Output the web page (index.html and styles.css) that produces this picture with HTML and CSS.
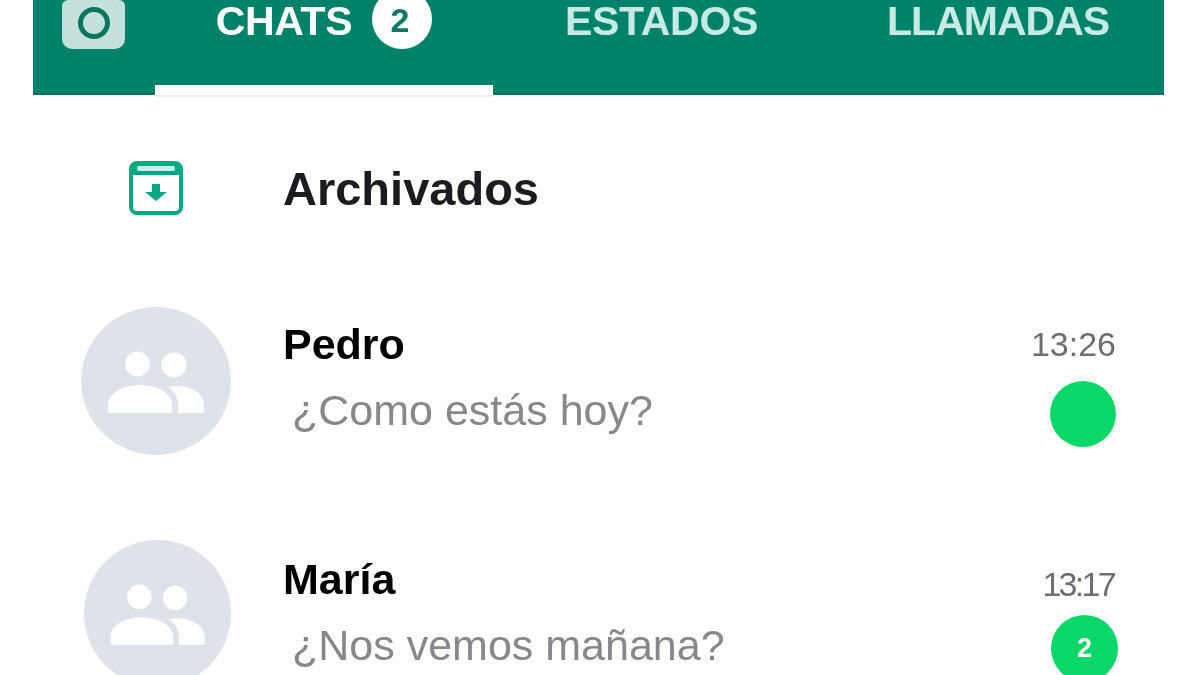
FILE: index.html
```html
<!DOCTYPE html>
<html lang="es">
<head>
<meta charset="utf-8">
<title>Chats</title>
<link rel="stylesheet" href="styles.css">
</head>
<body>
<header class="bar">
  <div class="camera"><span class="lens"></span></div>
  <div class="tab tab-active">
    <div class="tab-inner"><span class="tab-label">CHATS</span><span class="tab-count">2</span></div>
  </div>
  <div class="tab-plain tab-estados">ESTADOS</div>
  <div class="tab-plain tab-llamadas">LLAMADAS</div>
</header>
<section class="archived">
  <svg class="archive-icon" viewBox="0 0 54 54" aria-hidden="true">
    <rect x="2" y="2" width="50" height="50" rx="6" fill="none" stroke="#05a884" stroke-width="4"/>
    <rect x="3" y="3" width="48" height="11" fill="#05a884"/>
    <rect x="8" y="5" width="38" height="5" rx="2" fill="#c9eee5"/>
    <path d="M23 23h8v8h7L27 40 16 31h7z" fill="#05a884"/>
  </svg>
  <span class="archive-label">Archivados</span>
</section>
<section class="chat chat-first">
  <div class="avatar">
    <svg viewBox="0 0 150 148" aria-hidden="true">
      <circle cx="56.5" cy="57" r="12.5" fill="#fff"/>
      <circle cx="93" cy="58" r="12.5" fill="#fff"/>
      <path d="M27 106V98C27 85 43 78 59 78S91 85 91 98V106Z" fill="#fff"/>
      <path d="M97 106V98C97 90 93 84 87 80C91 79 93 79 96 79C110 79 123 86 123 98V106Z" fill="#fff"/>
    </svg>
  </div>
  <div class="chat-body">
    <div class="chat-name">Pedro</div>
    <div class="chat-preview">¿Como estás hoy?</div>
  </div>
  <div class="chat-meta">
    <div class="chat-time">13:26</div>
    <div class="unread"></div>
  </div>
</section>
<section class="chat chat-second">
  <div class="avatar">
    <svg viewBox="0 0 150 148" aria-hidden="true">
      <circle cx="56.5" cy="57" r="12.5" fill="#fff"/>
      <circle cx="93" cy="58" r="12.5" fill="#fff"/>
      <path d="M27 106V98C27 85 43 78 59 78S91 85 91 98V106Z" fill="#fff"/>
      <path d="M97 106V98C97 90 93 84 87 80C91 79 93 79 96 79C110 79 123 86 123 98V106Z" fill="#fff"/>
    </svg>
  </div>
  <div class="chat-body">
    <div class="chat-name">María</div>
    <div class="chat-preview">¿Nos vemos mañana?</div>
  </div>
  <div class="chat-meta">
    <div class="chat-time">13:17</div>
    <div class="unread">2</div>
  </div>
</section>
</body>
</html>
```
FILE: styles.css
```css
* { box-sizing: border-box; }
html, body { margin: 0; height: 675px; overflow: hidden; background: #fff; }
body { font-family: "Liberation Sans", Arial, sans-serif; width: 1200px; filter: blur(0.4px); }

.bar {
  display: flex;
  align-items: flex-start;
  width: 1131px;
  height: 95px;
  margin-left: 33px;
  background: #00826a;
  border-bottom: 2px solid #0b6f5c;
}
.camera {
  width: 63px;
  height: 49px;
  margin-left: 29px;
  padding-top: 7px;
  background: #c4e1db;
  border-radius: 6px 6px 10px 10px;
  display: flex;
  align-items: flex-start;
  justify-content: center;
}
.lens {
  width: 32px;
  height: 32px;
  border: 5px solid #0c755f;
  border-radius: 50%;
}
.tab {
  width: 338px;
  height: 95px;
  margin-left: 30px;
  border-bottom: 10px solid #fff;
  box-shadow: 0 3px 0 -1px #eeeeee;
  flex: none;
}
.tab-inner {
  display: flex;
  align-items: center;
  justify-content: center;
  gap: 20px;
  height: 60px;
  margin-top: -11px;
}
.tab-label {
  margin-top: 3px;
  font-size: 41px;
  line-height: 34px;
  font-weight: 700;
  color: #fff;
  letter-spacing: -0.3px;
}
.tab-count {
  width: 60px;
  height: 60px;
  padding-right: 5px;
  padding-top: 2px;
  border-radius: 50%;
  background: #fff;
  color: #0c7a63;
  font-size: 34px;
  font-weight: 700;
  display: flex;
  align-items: center;
  justify-content: center;
}
.tab-plain {
  margin-top: 3px;
  font-size: 41px;
  font-weight: 700;
  line-height: 36px;
  color: #c6ebe4;
  letter-spacing: -0.3px;
  flex: none;
}
.tab-estados { margin-left: 72px; }
.tab-llamadas { margin-left: 129px; letter-spacing: -1px; }

.archived {
  display: flex;
  align-items: center;
  height: 186px;
  padding-left: 129px;
}
.archive-icon { width: 54px; height: 54px; flex: none; }
.archive-label {
  margin-left: 100px;
  font-size: 47px;
  font-weight: 700;
  color: #1b1c20;
}

.chat {
  display: flex;
  align-items: flex-start;
  height: 233px;
  padding: 26px 84px 0 81px;
}
.avatar {
  width: 150px;
  height: 148px;
  flex: none;
  border-radius: 50%;
  background: #dfe3e9;
}
.avatar svg { display: block; width: 100%; height: 100%; }
.chat-body { margin-left: 52px; flex: 1; padding-top: 13px; }
.chat-name {
  font-size: 43px;
  font-weight: 700;
  line-height: 48px;
  color: #000;
}
.chat-preview {
  margin-top: 17px;
  padding-left: 9px;
  font-size: 43px;
  line-height: 50px;
  color: #87888b;
}
.chat-meta {
  display: flex;
  flex-direction: column;
  align-items: flex-end;
  padding-top: 17px;
}
.chat-time {
  font-size: 34px;
  line-height: 40px;
  color: #6b6e73;
}
.unread {
  width: 66px;
  height: 66px;
  margin-top: 17px;
  border-radius: 50%;
  background: #08d867;
  color: #fff;
  font-size: 27px;
  font-weight: 700;
  display: flex;
  align-items: center;
  justify-content: center;
}

.chat-second .avatar { width: 147px; height: 147px; margin-left: 3px; }
.chat-second .chat-body { padding-top: 15px; }
.chat-second .chat-preview { margin-top: 17px; }
.chat-second .chat-meta { padding-top: 24px; }
.chat-second .chat-time { letter-spacing: -2.7px; margin-right: 2px; }
.chat-second .unread { width: 67px; height: 67px; margin-top: 11px; margin-right: -2px; }
```
